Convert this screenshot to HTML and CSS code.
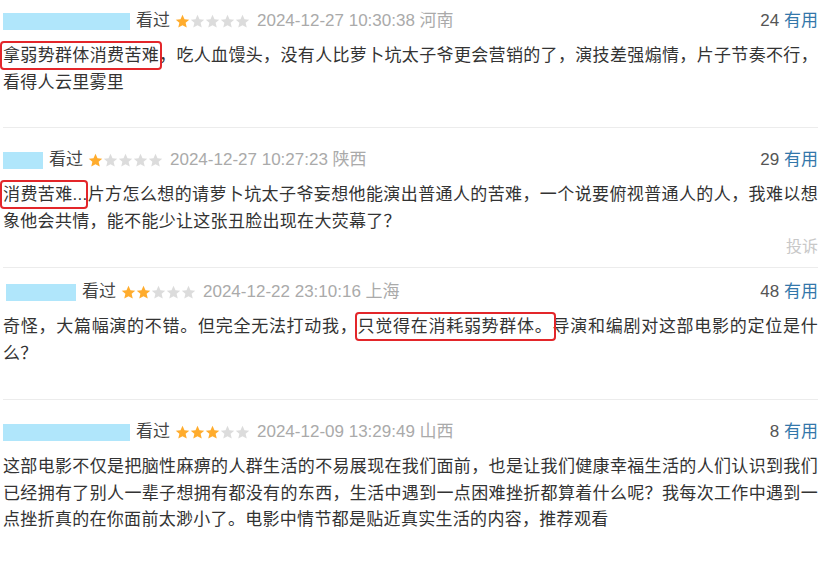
FILE: index.html
```html
<!DOCTYPE html>
<html lang="zh-CN">
<head>
    <meta charset="UTF-8">
    <meta name="viewport" content="width=device-width, initial-scale=1.0">
    <title>短评</title>
    <link rel="stylesheet" href="styles.css">
</head>
<body>
    <svg class="sprite" xmlns="http://www.w3.org/2000/svg">
        <symbol id="star" viewBox="0 0 24 24">
            <path d="M12 1.2l3.2 7.1 7.6.7-5.8 5.1 1.8 7.6L12 17.8l-6.8 3.9 1.8-7.6-5.8-5.1 7.6-.7z"/>
        </symbol>
    </svg>

    <div class="comment-list">
        <!-- 短评 1 -->
        <div class="comment-item">
            <div class="comment-info">
                <span class="user-name name-lg"></span>
                <span class="watched">看过</span>
                <span class="rating">
                    <svg class="star on"><use href="#star"/></svg><svg class="star"><use href="#star"/></svg><svg class="star"><use href="#star"/></svg><svg class="star"><use href="#star"/></svg><svg class="star"><use href="#star"/></svg>
                </span>
                <span class="comment-time">2024-12-27 10:30:38 河南</span>
                <span class="votes"><span class="vote-count">24</span> <a class="vote-link">有用</a></span>
            </div>
            <p class="comment-content"><span class="mark">拿弱势群体消费苦难</span>，吃人血馒头，没有人比萝卜坑太子爷更会营销的了，演技差强煽情，片子节奏不行，看得人云里雾里</p>
        </div>

        <!-- 短评 2 -->
        <div class="comment-item has-report">
            <div class="comment-info">
                <span class="user-name name-sm"></span>
                <span class="watched">看过</span>
                <span class="rating">
                    <svg class="star on"><use href="#star"/></svg><svg class="star"><use href="#star"/></svg><svg class="star"><use href="#star"/></svg><svg class="star"><use href="#star"/></svg><svg class="star"><use href="#star"/></svg>
                </span>
                <span class="comment-time">2024-12-27 10:27:23 陕西</span>
                <span class="votes"><span class="vote-count">29</span> <a class="vote-link">有用</a></span>
            </div>
            <p class="comment-content"><span class="mark mark-tight">消费苦难...</span>片方怎么想的请萝卜坑太子爷妄想他能演出普通人的苦难，一个说要俯视普通人的人，我难以想象他会共情，能不能少让这张丑脸出现在大荧幕了？</p>
            <div class="comment-actions"><a class="report">投诉</a></div>
        </div>

        <!-- 短评 3 -->
        <div class="comment-item">
            <div class="comment-info">
                <span class="user-name name-md"></span>
                <span class="watched">看过</span>
                <span class="rating">
                    <svg class="star on"><use href="#star"/></svg><svg class="star on"><use href="#star"/></svg><svg class="star"><use href="#star"/></svg><svg class="star"><use href="#star"/></svg><svg class="star"><use href="#star"/></svg>
                </span>
                <span class="comment-time">2024-12-22 23:10:16 上海</span>
                <span class="votes"><span class="vote-count">48</span> <a class="vote-link">有用</a></span>
            </div>
            <p class="comment-content">奇怪，大篇幅演的不错。但完全无法打动我，<span class="mark">只觉得在消耗弱势群体。</span>导演和编剧对这部电影的定位是什么？</p>
        </div>

        <!-- 短评 4 -->
        <div class="comment-item">
            <div class="comment-info">
                <span class="user-name name-lg"></span>
                <span class="watched">看过</span>
                <span class="rating">
                    <svg class="star on"><use href="#star"/></svg><svg class="star on"><use href="#star"/></svg><svg class="star on"><use href="#star"/></svg><svg class="star"><use href="#star"/></svg><svg class="star"><use href="#star"/></svg>
                </span>
                <span class="comment-time">2024-12-09 13:29:49 山西</span>
                <span class="votes"><span class="vote-count">8</span> <a class="vote-link">有用</a></span>
            </div>
            <p class="comment-content">这部电影不仅是把脑性麻痹的人群生活的不易展现在我们面前，也是让我们健康幸福生活的人们认识到我们已经拥有了别人一辈子想拥有都没有的东西，生活中遇到一点困难挫折都算着什么呢？我每次工作中遇到一点挫折真的在你面前太渺小了。电影中情节都是贴近真实生活的内容，推荐观看</p>
        </div>
    </div>
</body>
</html>
```

FILE: styles.css
```css
:root {
    --text-color: #333;
    --muted-color: #aaa;
    --link-color: #37a;
    --star-color: #ffac2d;
    --star-empty: #dcdcdc;
    --mark-color: #e3262a;
}

* {
    box-sizing: border-box;
    margin: 0;
    padding: 0;
}

body {
    background: #fff;
    color: var(--text-color);
    font-family: 'Liberation Sans', 'Noto Sans CJK SC', sans-serif;
    font-size: 17px;
}

.sprite {
    display: none;
}

.comment-list {
    padding: 9px 4px 0 3px;
}

.comment-item {
    padding: 20px 0 32px;
    border-bottom: 1px solid #ececec;
}

.comment-item:first-child {
    padding-top: 0;
    padding-bottom: 31px;
}

.comment-item.has-report {
    padding-bottom: 8px;
}

.comment-item.has-report + .comment-item {
    padding-top: 12px;
}

.comment-info {
    display: flex;
    align-items: center;
    height: 24px;
    line-height: 24px;
}

.user-name {
    display: block;
    height: 17px;
    background: #b0e6fb;
    margin-right: 6px;
}

.name-lg {
    width: 127px;
}

.name-md {
    width: 70px;
    margin-left: 3px;
}

.name-sm {
    width: 40px;
}

.watched {
    color: #444;
    margin-right: 5px;
}

.rating {
    display: flex;
    gap: 0;
    margin-right: 7px;
}

.star {
    width: 15px;
    height: 15px;
    fill: var(--star-empty);
}

.star.on {
    fill: var(--star-color);
}

.comment-time {
    color: var(--muted-color);
}

.votes {
    margin-left: auto;
    color: #555;
}

.vote-link {
    color: var(--link-color);
    cursor: pointer;
}

.comment-content {
    margin-top: 10px;
    line-height: 26.5px;
    letter-spacing: 0.3px;
    text-align: justify;
}

.mark {
    position: relative;
}

.mark::after {
    content: "";
    position: absolute;
    left: -3px;
    right: -3px;
    top: -5px;
    bottom: -5px;
    border: 2px solid var(--mark-color);
    border-radius: 4px;
}

.mark-tight::after {
    right: 0;
}

.comment-actions {
    text-align: right;
    line-height: 24px;
    font-size: 16px;
}

.report {
    color: #c8c8c8;
    cursor: pointer;
}
```
